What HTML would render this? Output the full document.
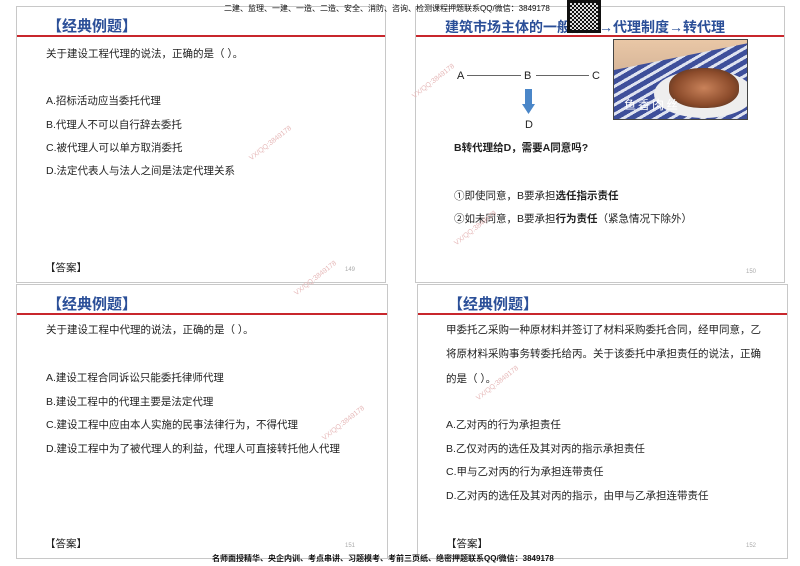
<!DOCTYPE html>
<html><head><meta charset="utf-8"><style>
*{margin:0;padding:0;box-sizing:border-box}
body{width:800px;height:566px;background:#fff;position:relative;overflow:hidden;font-family:"Liberation Sans","Noto Sans CJK SC",sans-serif;color:#222}
.p{position:absolute;border:1px solid #c8c8c8;background:#fff}
.red{position:absolute;left:0;right:0;height:2px;background:#c8262c}
.t{position:absolute;font-weight:bold;color:#2b4f98;font-size:15px;white-space:nowrap}
.x{position:absolute;font-size:10.5px;white-space:nowrap;line-height:1}
.n{position:absolute;font-size:6px;color:#aaa}
.w{position:absolute;font-size:7px;color:#e6b8b8;transform:rotate(-38deg);white-space:nowrap}
.top{position:absolute;font-size:8px;white-space:nowrap;color:#111}
.ln{position:absolute;height:1px;background:#666}
</style></head><body>
<div class="p" style="left:16px;top:6px;width:370px;height:277px">
 <div class="red" style="top:28px"></div>
 <div class="t" style="left:30px;top:8px">【经典例题】</div>
 <div class="x" style="left:29px;top:42px">关于建设工程代理的说法，正确的是（ ）。</div>
 <div class="x" style="left:29px;top:89px">A.招标活动应当委托代理</div>
 <div class="x" style="left:29px;top:113px">B.代理人不可以自行辞去委托</div>
 <div class="x" style="left:29px;top:136px">C.被代理人可以单方取消委托</div>
 <div class="x" style="left:29px;top:159px">D.法定代表人与法人之间是法定代理关系</div>
 <div class="x" style="left:28px;top:256px">【答案】</div>
 <div class="n" style="left:328px;top:260px">149</div>
</div>
<div class="p" style="left:415px;top:6px;width:370px;height:277px">
 <div class="red" style="top:28px"></div>
 <div class="t" style="left:29px;top:10px;font-size:14px">建筑市场主体的一般规定→代理制度→转代理</div>
 <div class="x" style="left:41px;top:64px;font-size:11px">A</div>
 <div class="ln" style="left:51px;width:54px;top:68px"></div>
 <div class="x" style="left:108px;top:64px;font-size:11px">B</div>
 <div class="ln" style="left:120px;width:53px;top:68px"></div>
 <div class="x" style="left:176px;top:64px;font-size:11px">C</div>
 <svg style="position:absolute;left:106px;top:82px" width="13" height="26"><rect x="3" y="0" width="7" height="16" fill="#4a86c8"/><polygon points="0,15 13,15 6.5,25" fill="#4a86c8"/></svg>
 <div class="x" style="left:109px;top:113px;font-size:11px">D</div>
 <div class="x" style="left:38px;top:136px;font-weight:bold">B转代理给D，需要A同意吗?</div>
 <div class="x" style="left:38px;top:184px">①即使同意，B要承担<b>选任指示责任</b></div>
 <div class="x" style="left:38px;top:207px">②如未同意，B要承担<b>行为责任</b>（紧急情况下除外）</div>
 <div class="n" style="left:330px;top:262px">150</div>
 <div style="position:absolute;left:197px;top:32px;width:135px;height:81px;border:1px solid #444;overflow:hidden;background:repeating-linear-gradient(-30deg,#3e4f9a 0 5px,#dfe3f0 5px 8px)">
  <div style="position:absolute;left:0;top:0;width:135px;height:30px;background:linear-gradient(#e9c7a6,#d8b79a);clip-path:polygon(0 0,100% 0,100% 10%,0 100%)"></div>
  <div style="position:absolute;left:40px;top:30px;width:100px;height:48px;border-radius:50%;background:#eee"></div>
  <div style="position:absolute;left:55px;top:28px;width:70px;height:40px;border-radius:45%;background:radial-gradient(#c9825a,#8a4a2a 60%,#3a2a20)"></div>
  <div style="position:absolute;left:10px;top:56px;color:#fff;font-size:12px;letter-spacing:2px">鱼香肉丝</div>
 </div>
</div>
<div class="p" style="left:16px;top:284px;width:372px;height:275px">
 <div class="red" style="top:28px"></div>
 <div class="t" style="left:30px;top:8px">【经典例题】</div>
 <div class="x" style="left:29px;top:40px">关于建设工程中代理的说法，正确的是（ ）。</div>
 <div class="x" style="left:29px;top:88px">A.建设工程合同诉讼只能委托律师代理</div>
 <div class="x" style="left:29px;top:112px">B.建设工程中的代理主要是法定代理</div>
 <div class="x" style="left:29px;top:135px">C.建设工程中应由本人实施的民事法律行为，不得代理</div>
 <div class="x" style="left:29px;top:159px">D.建设工程中为了被代理人的利益，代理人可直接转托他人代理</div>
 <div class="x" style="left:28px;top:254px">【答案】</div>
 <div class="n" style="left:328px;top:258px">151</div>
</div>
<div class="p" style="left:417px;top:284px;width:371px;height:275px">
 <div class="red" style="top:28px"></div>
 <div class="t" style="left:30px;top:8px">【经典例题】</div>
 <div class="x" style="left:28px;top:40px">甲委托乙采购一种原材料并签订了材料采购委托合同，经甲同意，乙</div>
 <div class="x" style="left:28px;top:64px">将原材料采购事务转委托给丙。关于该委托中承担责任的说法，正确</div>
 <div class="x" style="left:28px;top:89px">的是（ ）。</div>
 <div class="x" style="left:28px;top:135px">A.乙对丙的行为承担责任</div>
 <div class="x" style="left:28px;top:159px">B.乙仅对丙的选任及其对丙的指示承担责任</div>
 <div class="x" style="left:28px;top:182px">C.甲与乙对丙的行为承担连带责任</div>
 <div class="x" style="left:28px;top:206px">D.乙对丙的选任及其对丙的指示，由甲与乙承担连带责任</div>
 <div class="x" style="left:28px;top:254px">【答案】</div>
 <div class="n" style="left:328px;top:258px">152</div>
</div>
<div class="w" style="left:245px;top:140px">VX/QQ:3849178</div>
<div class="w" style="left:408px;top:78px">VX/QQ:3849178</div>
<div class="w" style="left:450px;top:225px">VX/QQ:3849178</div>
<div class="w" style="left:290px;top:275px">VX/QQ:3849178</div>
<div class="w" style="left:318px;top:420px">VX/QQ:3849178</div>
<div class="w" style="left:472px;top:380px">VX/QQ:3849178</div>
<div class="top" style="left:224px;top:3px">二建、监理、一建、一造、二造、安全、消防、咨询、检测课程押题联系QQ/微信：3849178</div>
<div class="top" style="left:212px;top:553px;font-weight:bold">名师面授精华、央企内训、考点串讲、习题模考、考前三页纸、绝密押题联系QQ/微信：3849178</div>
<div style="position:absolute;left:567px;top:0;width:34px;height:33px;background:#111;padding:3px">
 <div style="width:100%;height:100%;background:repeating-conic-gradient(#111 0 25%,#ddd 0 50%) 0 0/4px 4px"></div>
</div>
</body></html>
